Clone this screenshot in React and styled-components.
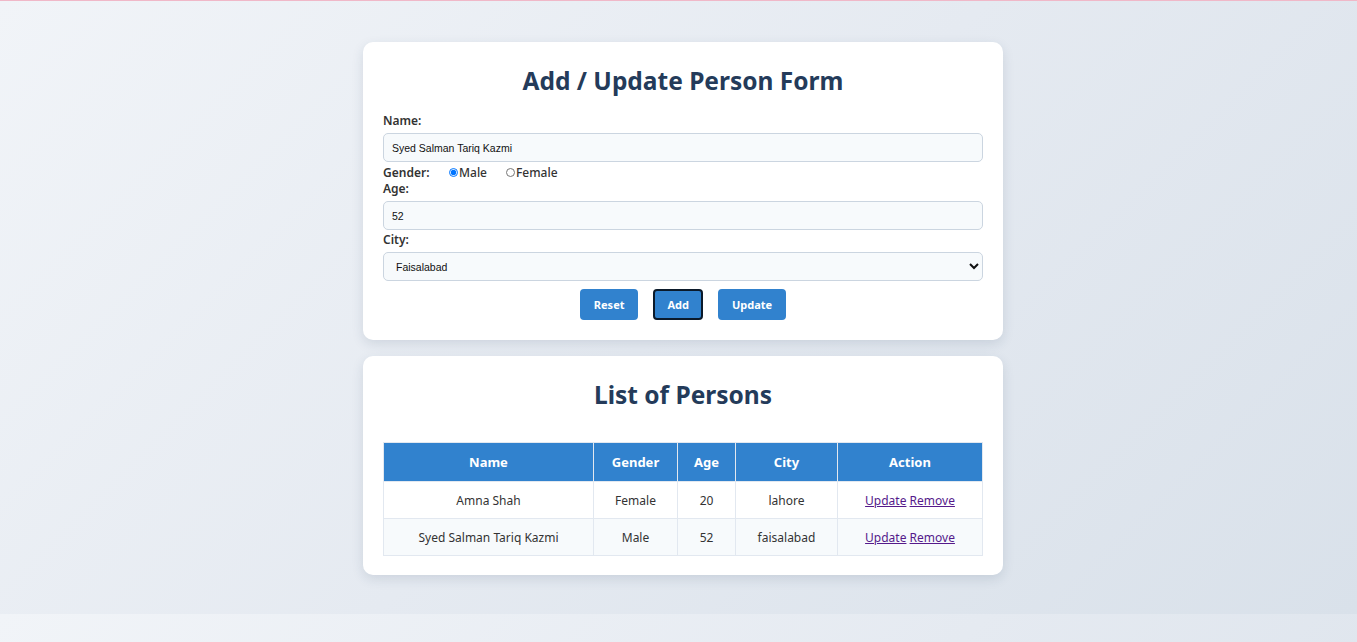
import React from "react";
import styled, { createGlobalStyle } from "styled-components";

const Global = createGlobalStyle`
  html {
    background: linear-gradient(135deg, #f1f4f8 0%, #e5eaf1 50%, #d9e1ea 100%);
  }
  body {
    margin: 0;
    font-family: "Noto Sans", "Open Sans", sans-serif;
    color: #333;
  }
`;

const Page = styled.div`
  border-top: 1px solid #f0b8c8;
  padding: 41px 0 39px 9px;
  display: flex;
  flex-direction: column;
  align-items: center;
  gap: 16px;
`;

const Card = styled.section`
  width: 600px;
  padding: 20px 20px ${(p) => p.$pb || 20}px;
  background: #fff;
  border-radius: 10px;
  box-shadow: 0 4px 12px rgba(40, 60, 90, 0.13);
`;

const Title = styled.h2`
  margin: 0 0 ${(p) => p.$gap}px;
  height: 38px;
  line-height: 38px;
  text-align: center;
  font-size: 24.5px;
  font-weight: 700;
  color: #243b5a;
`;

const Label = styled.label`
  display: block;
  font-size: 12px;
  font-weight: 600;
  color: #333;
  line-height: 16px;
  margin-top: ${(p) => p.$top || 0}px;
`;

const Input = styled.input`
  box-sizing: border-box;
  display: block;
  width: 100%;
  height: 29px;
  margin-top: 4px;
  padding: 0 8px;
  border: 1px solid #cbd5e0;
  border-radius: 5px;
  background: #f7fafc;
  font-family: "Liberation Sans", Arial, sans-serif;
  font-size: 10.5px;
  color: #111;
  outline: none;
`;

const Select = styled.select`
  box-sizing: border-box;
  display: block;
  width: 100%;
  height: 29px;
  margin-top: 4px;
  padding: 0 8px;
  border: 1px solid #cbd5e0;
  border-radius: 5px;
  background: #f7fafc;
  font-family: "Liberation Sans", Arial, sans-serif;
  font-size: 10.5px;
  color: #111;
  outline: none;
`;

const GenderRow = styled.div`
  display: flex;
  align-items: center;
  height: 18px;
  margin-top: 1px;
  font-size: 12px;
  font-weight: 600;
  color: #333;
`;

const GenderLabel = styled.span`
  width: 66px;
`;

const RadioOption = styled.label`
  display: flex;
  align-items: center;
  margin-right: ${(p) => p.$mr || 0}px;
  font-weight: 500;
`;

const Radio = styled.input`
  width: 9px;
  height: 9px;
  margin: 0 1px 0 0;
`;

const Buttons = styled.div`
  display: flex;
  justify-content: center;
  gap: 15px;
  margin-top: 8px;
`;

const Button = styled.button`
  box-sizing: border-box;
  height: 31px;
  padding: 0 12px;
  border: 2px solid ${(p) => (p.$focused ? "#0b1a2a" : "#3182ce")};
  border-radius: 4px;
  background: #3182ce;
  color: #fff;
  font-family: "Noto Sans", sans-serif;
  font-size: 11px;
  font-weight: 700;
  cursor: pointer;
`;

const Table = styled.table`
  width: 100%;
  table-layout: fixed;
  border-collapse: collapse;
  font-size: 12px;
  color: #333;
`;

const Th = styled.th`
  height: 38px;
  padding: 0;
  background: #3182ce;
  color: #fff;
  font-weight: 700;
  font-size: 13px;
  border: 1px solid #e2e8f0;
  width: ${(p) => (p.$w ? `${p.$w}px` : "auto")};
`;

const Tr = styled.tr`
  background: ${(p) => (p.$alt ? "#f7fafc" : "#fff")};
`;

const Td = styled.td`
  height: 36px;
  padding: 0;
  text-align: center;
  border: 1px solid #e2e8f0;
`;

const Link = styled.a`
  color: #551a8b;
  text-decoration: underline;
`;

const persons = [
  { name: "Amna Shah", gender: "Female", age: 20, city: "lahore" },
  { name: "Syed Salman Tariq Kazmi", gender: "Male", age: 52, city: "faisalabad" },
];

export default function App() {
  return (
    <>
      <Global />
      <Page>
        <Card>
          <Title $gap={13}>Add / Update Person Form</Title>
          <Label>Name:</Label>
          <Input defaultValue="Syed Salman Tariq Kazmi" />
          <GenderRow>
            <GenderLabel>Gender:</GenderLabel>
            <RadioOption $mr={19}>
              <Radio type="radio" name="g" defaultChecked />
              Male
            </RadioOption>
            <RadioOption>
              <Radio type="radio" name="g" />
              Female
            </RadioOption>
          </GenderRow>
          <Label>Age:</Label>
          <Input defaultValue="52" />
          <Label $top={2}>City:</Label>
          <Select defaultValue="Faisalabad">
            <option>Lahore</option>
            <option>Faisalabad</option>
            <option>Karachi</option>
          </Select>
          <Buttons>
            <Button>Reset</Button>
            <Button $focused>Add</Button>
            <Button>Update</Button>
          </Buttons>
        </Card>
        <Card $pb={19}>
          <Title $gap={28}>List of Persons</Title>
          <Table>
            <thead>
              <tr>
                <Th $w={209}>Name</Th>
                <Th $w={83}>Gender</Th>
                <Th $w={57}>Age</Th>
                <Th $w={101}>City</Th>
                <Th>Action</Th>
              </tr>
            </thead>
            <tbody>
              {persons.map((p, i) => (
                <Tr key={p.name} $alt={i % 2 === 1}>
                  <Td>{p.name}</Td>
                  <Td>{p.gender}</Td>
                  <Td>{p.age}</Td>
                  <Td>{p.city}</Td>
                  <Td>
                    <Link href="#u">Update</Link> <Link href="#r">Remove</Link>
                  </Td>
                </Tr>
              ))}
            </tbody>
          </Table>
        </Card>
      </Page>
    </>
  );
}
